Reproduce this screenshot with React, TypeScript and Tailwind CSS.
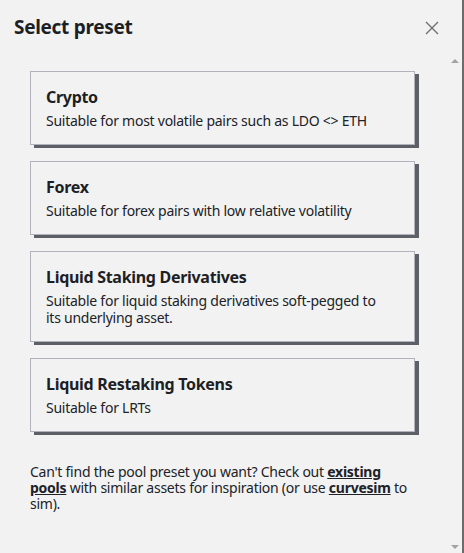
import React from 'react';

const presets = [
  { title: 'Crypto', description: 'Suitable for most volatile pairs such as LDO <> ETH' },
  { title: 'Forex', description: 'Suitable for forex pairs with low relative volatility' },
  {
    title: 'Liquid Staking Derivatives',
    description: 'Suitable for liquid staking derivatives soft-pegged to its underlying asset.',
  },
  { title: 'Liquid Restaking Tokens', description: 'Suitable for LRTs' },
];

const PresetCard: React.FC<{ title: string; description: string }> = ({ title, description }) => (
  <button className="w-[385px] text-left bg-[#f2f2f2] border border-[#b2b2be] shadow-[4px_3px_0_0_#5c5f66] pl-[15px] pr-[30px] pt-[14px] pb-[15px]">
    <div className="text-[16px] leading-[22px] font-bold tracking-[-0.3px] text-[#1d1f24]">{title}</div>
    <div className="text-[14px] leading-[17px] tracking-[-0.25px] text-[#202227] mt-[4px]">{description}</div>
  </button>
);

export default function App() {
  return (
    <div
      className="w-[464px] h-[553px] bg-[#f2f2f2] flex flex-col overflow-hidden border-r-2 border-[#6a6c72]"
      style={{ fontFamily: '"Noto Sans", "Liberation Sans", sans-serif' }}
    >
      <div className="h-[55px] shrink-0 flex items-center justify-between pl-[14px] pr-[22px]">
        <h2 className="text-[19px] font-bold tracking-[-0.3px] text-[#1d1f24]">Select preset</h2>
        <button className="text-[#707070]">
          <svg width="16" height="16" viewBox="0 0 16 16" fill="none" stroke="currentColor" strokeWidth="1.4">
            <path d="M2 2 L14 14 M14 2 L2 14" />
          </svg>
        </button>
      </div>
      <div className="flex-1 flex min-h-0">
        <div className="flex-1 pl-[30px] pt-[16px] flex flex-col gap-[16px]">
          {presets.map((p) => (
            <PresetCard key={p.title} title={p.title} description={p.description} />
          ))}
          <p className="w-[385px] text-[14px] leading-[16px] tracking-[-0.25px] text-[#202227] mt-[16px]">
            Can't find the pool preset you want? Check out{' '}
            <a className="font-bold underline">existing pools</a> with similar assets for inspiration (or use{' '}
            <a className="font-bold underline">curvesim</a> to sim).
          </p>
        </div>
        <div className="w-[15px] shrink-0 flex flex-col items-center justify-between py-[4px]">
          <div className="w-0 h-0 border-l-[4px] border-r-[4px] border-b-[4px] border-l-transparent border-r-transparent border-b-[#a3a3a3]" />
          <div className="w-0 h-0 border-l-[4px] border-r-[4px] border-t-[4px] border-l-transparent border-r-transparent border-t-[#a3a3a3]" />
        </div>
      </div>
    </div>
  );
}
